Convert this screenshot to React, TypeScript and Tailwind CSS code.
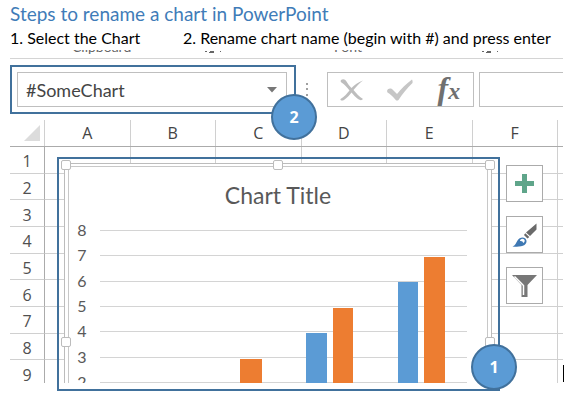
import type { ReactNode } from "react";

const columns = ["A", "B", "C", "D", "E", "F"];
const rows = [1, 2, 3, 4, 5, 6, 7, 8, 9];

const axis = [
  { value: 8, y: 15 },
  { value: 7, y: 40 },
  { value: 6, y: 66 },
  { value: 5, y: 91 },
  { value: 4, y: 116 },
  { value: 3, y: 142 },
  { value: 2, y: 167 },
];

const bars = [
  { x: 176, width: 22, top: 143, fill: "#ed7d31" },
  { x: 242, width: 21, top: 117, fill: "#5b9bd5" },
  { x: 269, width: 20, top: 92, fill: "#ed7d31" },
  { x: 334, width: 20, top: 66, fill: "#5b9bd5" },
  { x: 360, width: 21, top: 41, fill: "#ed7d31" },
];

function Badge({ children, className }: { children: ReactNode; className: string }) {
  return (
    <span
      className={`absolute z-10 flex size-[46px] items-center justify-center rounded-full border-2 border-[#41719c] bg-[#5b9bd5] font-['Open_Sans',sans-serif] text-base font-bold text-white ${className}`}
    >
      {children}
    </span>
  );
}

function Handle({ className }: { className: string }) {
  return <span className={`absolute size-[10px] rounded-xs border border-[#bcbcbc] bg-white ${className}`} />;
}

function ToolButton({ label, children }: { label: string; children: ReactNode }) {
  return (
    <button
      type="button"
      aria-label={label}
      className="flex size-[37px] items-center justify-center border border-[#ababab] bg-white"
    >
      {children}
    </button>
  );
}

function RibbonEdge() {
  return (
    <div className="mt-[2px] flex h-[4px] items-end overflow-hidden text-[#666]" aria-hidden="true">
      <div className="grid w-full grid-cols-[62px_133px_129px_148px_1fr] items-end text-sm leading-[14px]">
        <span />
        <span>Clipboard</span>
        <Launcher />
        <span>Font</span>
        <Launcher />
      </div>
    </div>
  );
}

function Launcher() {
  return (
    <svg width="18" height="4" viewBox="0 0 18 4" fill="#666">
      <path d="M0 1h2v1H0zM5 1h4v1H5zM4 2h5v1H4zM15 1h1v1h-1z" />
    </svg>
  );
}

function FormulaBar() {
  return (
    <div className="mt-[6px] flex items-center">
      <div className="relative w-[286px] shrink-0 border-2 border-[#41719c] py-[5px] pr-[7px] pl-[5px]">
        <div className="flex h-[35px] items-center border border-[#bfbfbf] bg-white">
          <input
            aria-label="Chart name"
            defaultValue="#SomeChart"
            className="h-full min-w-0 flex-1 pl-2 text-lg text-[#444] outline-none"
          />
          <button type="button" aria-label="Show names" className="flex h-full w-[28px] items-center justify-center">
            <svg width="10" height="6" viewBox="0 0 10 6">
              <path d="M0 0h10L5 5.5z" fill="#777" />
            </svg>
          </button>
        </div>
        <Badge className="-right-[23px] -bottom-[28px]">2</Badge>
      </div>
      <svg width="31" height="35" viewBox="0 0 31 35" className="shrink-0" aria-hidden="true">
        <path d="M10 11h2v2h-2zM10 16h2v2h-2zM10 22h2v2h-2z" fill="#a0a0a0" />
      </svg>
      <div className="flex h-[35px] w-[147px] shrink-0 items-center border border-[#bfbfbf]">
        <button type="button" aria-label="Cancel" className="flex flex-1 justify-center">
          <svg width="24" height="22" viewBox="0 0 24 22" fill="#bdbdbd">
            <path d="M1 1C3-.5 5 0 6.500 2.500 8 5 9.500 7 11.500 9 14.500 6 18 3 23 1.500 19 4.500 16 8 13.500 11 16 14 19 17.500 23 20 22 21.500 20 21.500 18 20 15.500 18 13.500 16 11.500 13.500 9.500 16 7 19 4 21 2 22 0 21.500.5 20 4 18 7 14.500 9.500 11.500 7 8.500 5 5.500 1.500 3.500.5 3 .5 2 1 1z" />
          </svg>
        </button>
        <button type="button" aria-label="Enter" className="flex flex-1 justify-center">
          <svg width="26" height="22" viewBox="0 0 26 22" fill="#c6c6c6">
            <path d="M0 12c1-3 4-3 6-1l4 4C14 10 19 5 25 .5c.5 1 .8 2 .5 3.500C20 9 15.500 15 11.500 21c-1.200 1-2.200.6-3-.3C6 17.500 3 15 .5 13.500z" />
          </svg>
        </button>
        <button
          type="button"
          aria-label="Insert function"
          className="flex flex-1 items-baseline justify-center pb-1 font-['Liberation_Serif',serif] text-[32px] leading-[32px] font-bold text-[#707070] italic"
        >
          f<span className="text-2xl leading-none">x</span>
        </button>
      </div>
      <input
        aria-label="Formula"
        className="ml-[5px] h-[35px] min-w-0 flex-1 border border-r-0 border-[#bfbfbf] px-2 outline-none"
      />
    </div>
  );
}

function Sheet() {
  return (
    <div className="h-[236px] overflow-hidden">
      <table className="block font-['Open_Sans',sans-serif] text-base text-[#505050]">
        <tbody className="grid h-[240px] grid-rows-9">
          {rows.map((row) => (
            <tr key={row} className="grid min-h-0 grid-cols-[35px_repeat(6,minmax(0,1fr))_5px]">
              <th
                scope="row"
                className="flex items-center justify-center border-r border-b border-r-[#ababab] border-b-[#d0d0d0] pt-[3px] leading-none font-normal"
              >
                {row}
              </th>
              {columns.map((column) => (
                <td key={column} className="border-r border-b border-[#d0d0d0]" />
              ))}
              <td className="border-b border-[#d0d0d0]" />
            </tr>
          ))}
        </tbody>
      </table>
    </div>
  );
}

function Chart() {
  return (
    <section
      aria-label="Chart"
      className="absolute top-[16px] left-[54px] flex h-[220px] w-[428px] flex-col border border-b-0 border-[#bcbcbc] bg-white"
    >
      <div className="mx-[3px] mt-[2px] flex min-h-0 flex-1 flex-col rounded-t border border-b-0 border-[#c8c8c8]">
        <h2 className="mt-[14px] text-center text-[23px] leading-[28px] text-[#595959]">Chart Title</h2>
        <svg
          viewBox="5 0 418 167"
          className="mt-auto block w-full"
          height="167"
          role="img"
          aria-label="Clustered column chart"
        >
          {axis.map((tick) => (
            <g key={tick.value}>
              <path d={`M36 ${tick.y - 0.5}H403`} stroke="#d4d4d4" />
              <text x="18" y={tick.y + 5} textAnchor="middle" className="text-base" fill="#595959">
                {tick.value}
              </text>
            </g>
          ))}
          {bars.map((bar) => (
            <rect key={bar.x} x={bar.x} y={bar.top} width={bar.width} height={167 - bar.top} fill={bar.fill} />
          ))}
        </svg>
      </div>
      <Handle className="-top-[4px] -left-[4px]" />
      <Handle className="-top-[4px] left-[208px]" />
      <Handle className="-top-[4px] -right-[4px]" />
      <Handle className="top-[173px] -left-[4px]" />
      <Handle className="top-[173px] -right-[4px]" />
    </section>
  );
}

function ChartTools() {
  return (
    <div className="absolute top-[18px] left-[496px] flex flex-col gap-[14px]">
      <ToolButton label="Chart elements">
        <svg width="19" height="19" viewBox="0 0 19 19">
          <path d="M7 0h5v7h7v5h-7v7H7v-7H0V7h7z" fill="#5fa58a" />
        </svg>
      </ToolButton>
      <ToolButton label="Chart styles">
        <svg width="25" height="24" viewBox="0 0 25 24">
          <path d="M24.500.5v6l-6.500 6.500-4-3.500zM13.300 10.300l4 3.700-1.800 1.400-3.500-3.300z" fill="#6a6a6a" />
          <path d="M.5 23.500c3-1 3.500-3.500 5-6 1.600-2.800 5.100-4 7.500-2.300 2.400 2 1.800 5-.5 6.800-2.800 2-8 1.800-12 1.500z" fill="#3e78b3" />
          <path d="M8 18c0-2 2.300-3 4-1.800 1.300 1.300.8 3-.8 3.800-.2-1.500-1.300-2.300-3.200-2z" fill="#fff" />
        </svg>
      </ToolButton>
      <ToolButton label="Chart filters">
        <svg width="25" height="22" viewBox="0 0 25 22">
          <path d="M0 0h25l-9.500 10v12h-6V10z" fill="#777" />
          <path d="M2.500 1.500l9 9V20" fill="none" stroke="#fff" strokeWidth="1.500" />
        </svg>
      </ToolButton>
    </div>
  );
}

export default function App() {
  return (
    <main className="bg-white pr-[15px] pb-5 pl-[10px] font-['Lato',sans-serif]">
      <h1 className="text-[19px] leading-[27px] whitespace-nowrap text-[#3f7cb8]">
        Steps to rename a chart in PowerPoint
      </h1>
      <ol className="flex text-base leading-[21px] whitespace-nowrap text-black">
        <li className="w-[173px]">1. Select the Chart</li>
        <li>2. Rename chart name (begin with #) and press enter</li>
      </ol>
      <RibbonEdge />
      <div className="mt-[4px] border-t border-[#d4d4d4]" />
      <FormulaBar />
      <div className="mt-[6px] grid h-[27px] grid-cols-[35px_repeat(6,minmax(0,1fr))_5px] border-b border-[#ababab] font-['Open_Sans',sans-serif] text-base text-[#444]">
        <span className="flex items-end justify-end border-r border-[#d0d0d0] pr-[4px] pb-[5px]">
          <svg width="16" height="16" viewBox="0 0 16 16" aria-hidden="true">
            <path d="M16 0v16H0z" fill="#dcdcdc" />
          </svg>
        </span>
        {columns.map((column) => (
          <span key={column} className="flex items-center justify-center border-r border-[#d0d0d0]">
            {column}
          </span>
        ))}
      </div>
      <div className="relative">
        <Sheet />
        <Chart />
        <ChartTools />
        <div className="pointer-events-none absolute top-[10px] left-[47px] h-[234px] w-[443px] border-2 border-[#41719c]">
          <Badge className="-right-[19px] -bottom-[1px]">1</Badge>
        </div>
        <span className="absolute top-[218px] left-[553px] h-[17px] w-px bg-black" />
      </div>
    </main>
  );
}
